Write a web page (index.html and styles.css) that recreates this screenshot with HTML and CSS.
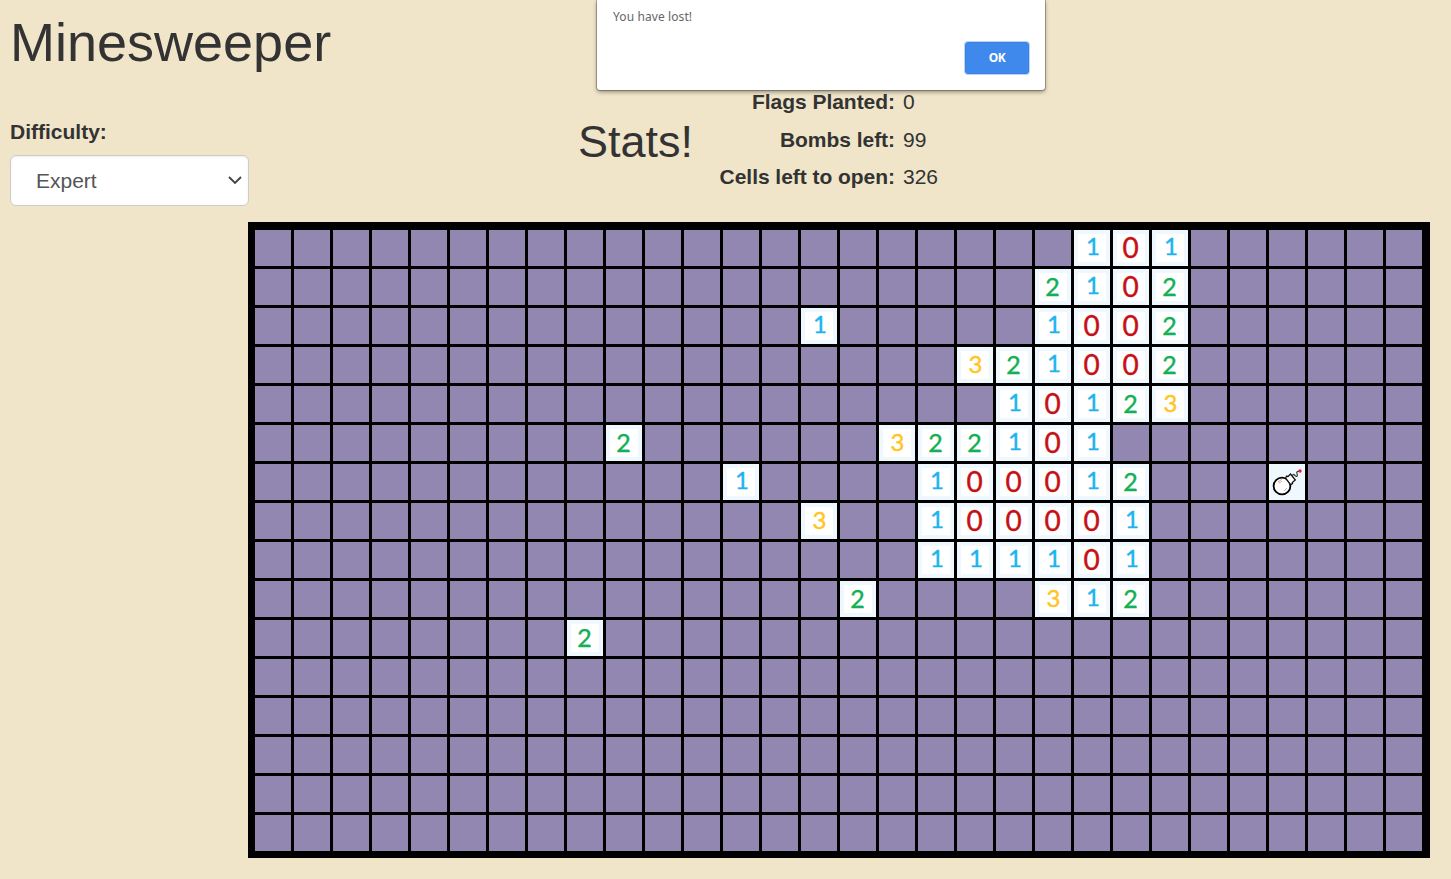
FILE: index.html
```html
<!DOCTYPE html>
<html lang="en">
<head>
<meta charset="utf-8">
<title>Minesweeper</title>
<link rel="stylesheet" href="styles.css">
</head>
<body>
<h1 class="title">Minesweeper</h1>
<div class="panel">
  <div class="difficulty">
    <label class="difficulty-label" for="level">Difficulty:</label>
    <div class="select" id="level"><span>Expert</span>
      <svg class="chevron" width="14" height="9" viewBox="0 0 14 9"><path d="M1 1l6 6 6-6" fill="none" stroke="#444" stroke-width="1.9"/></svg>
    </div>
  </div>
  <h2 class="stats-title">Stats!</h2>
  <dl class="stats">
    <dt>Flags Planted:</dt><dd>0</dd>
    <dt>Bombs left:</dt><dd>99</dd>
    <dt>Cells left to open:</dt><dd>326</dd>
  </dl>
</div>
<div class="board" id="board"></div>
<div class="dialog" role="alertdialog">
  <p class="message">You have lost!</p>
  <button class="ok" type="button">OK</button>
</div>
<script src="board.js"></script>
</body>
</html>
```
FILE: styles.css
```css
* { box-sizing: border-box; }
body {
  margin: 0;
  height: 879px;
  overflow: hidden;
  background: #f0e5c9;
  color: #333;
  font: 21px/30px "Liberation Sans", Arial, sans-serif;
}
.title {
  margin: 0;
  padding: 13px 10px 0;
  height: 87px;
  font-size: 54px;
  line-height: 59px;
  font-weight: 400;
}
.panel {
  display: flex;
  height: 135px;
  padding-left: 10px;
}
.difficulty { width: 239px; padding-top: 30px; }
.difficulty-label { display: block; height: 38px; font-weight: 700; }
.select {
  display: flex;
  align-items: center;
  justify-content: space-between;
  height: 51px;
  padding: 0 6px 0 25px;
  border: 1px solid #ccc;
  border-radius: 6px;
  background: #fff;
  box-shadow: inset 0 1px 2px rgba(0, 0, 0, .08);
  color: #555;
}
.stats-title {
  width: 116px;
  margin: 30px 0 0 329px;
  font-size: 45px;
  line-height: 50px;
  font-weight: 400;
}
.stats {
  display: grid;
  grid-template-columns: 201px auto;
  grid-auto-rows: 37.5px;
  column-gap: 8px;
  margin: 0;
}
.stats dt { text-align: right; font-weight: 700; letter-spacing: -.04px; }
.stats dd { margin: 0; }
.board {
  display: grid;
  grid-template-columns: repeat(30, 36px);
  grid-auto-rows: 36px;
  gap: 3px;
  width: 1182px;
  height: 636px;
  margin-left: 248px;
  padding: 8px 8px 7px 7px;
  background: #000;
}
.cell {
  display: flex;
  justify-content: center;
  background: #9287b1;
  font-family: Lato, sans-serif;
}
.open {
  border: 4px solid #f0f8ff;
  background: #fff;
  line-height: 26px;
  -webkit-text-stroke: .4px currentColor;
}
.n0 { color: #c51016; font-size: 28px; padding-right: 1px; }
.n1 { color: #1cb4ee; font-size: 24px; padding-left: 2px; line-height: 24px; }
.n2 { color: #14b055; font-size: 25px; padding-right: 1px; line-height: 26px; }
.n3 { color: #ffc522; font-size: 24px; padding-left: 1px; }
.bomb { background: #f0f8ff; }
.dialog {
  position: absolute;
  top: 0;
  left: 597px;
  display: flex;
  flex-direction: column;
  width: 448px;
  height: 90px;
  padding: 7px 16px 16px;
  border-radius: 0 0 3px 3px;
  background: #fff;
  box-shadow: 0 0 0 1px rgba(0, 0, 0, .25), 0 2px 4px rgba(0, 0, 0, .4);
}
.message {
  margin: 0;
  color: #666;
  font: 12px/20px "Noto Sans", sans-serif;
  letter-spacing: .1px;
}
.ok {
  align-self: flex-end;
  width: 64px;
  height: 32px;
  margin-top: 15px;
  padding: 0;
  border: 1px solid #3b82e3;
  border-radius: 3px;
  background: #4089ec;
  box-shadow: 0 0 0 1px #b9d6fa;
  color: #fff;
  font: 700 12px/16px "Noto Sans", sans-serif;
  letter-spacing: -.4px;
}
```
FILE: board.js
```js
const rows = [
  ".....................101......",
  "....................2102......",
  "..............1.....1002......",
  "..................321002......",
  "...................10123......",
  ".........2......322101........",
  "............1....100012...*...",
  "..............3..100001.......",
  ".................111101.......",
  "...............2....312.......",
  "........2.....................",
  "..............................",
  "..............................",
  "..............................",
  "..............................",
  ".............................."
];
const bomb = `<svg width="36" height="36" viewBox="0 0 36 36" fill="none">
  <circle cx="13" cy="22" r="8.4" fill="#fff" stroke="#000" stroke-width="1.8"/>
  <path d="M9 18l4-3M10 19l3-2M15 27l3-3" stroke="#ee9c9c"/>
  <path d="M16.5 14l1.2-2 1.2.6 2.6-2.6 4.8 6-3 2.4.2 1.2-2 1z" fill="#fff" stroke="#111" stroke-width="1.3"/>
  <path d="M23.5 12c.5-3 2-1.500 3 0s2.500-.5 1.500-2.500 1-2.500 3-2.500" stroke="#333" stroke-width="1.2"/>
  <circle cx="31" cy="7" r="1.7" fill="#e82020"/>
</svg>`;
const board = document.getElementById("board");
for (const row of rows) {
  for (const value of row) {
    const cell = document.createElement("div");
    cell.className = "cell";
    if (value === "*") {
      cell.classList.add("bomb");
      cell.innerHTML = bomb;
    } else if (value !== ".") {
      cell.classList.add("open", "n" + value);
      cell.textContent = value;
    }
    board.append(cell);
  }
}
```
